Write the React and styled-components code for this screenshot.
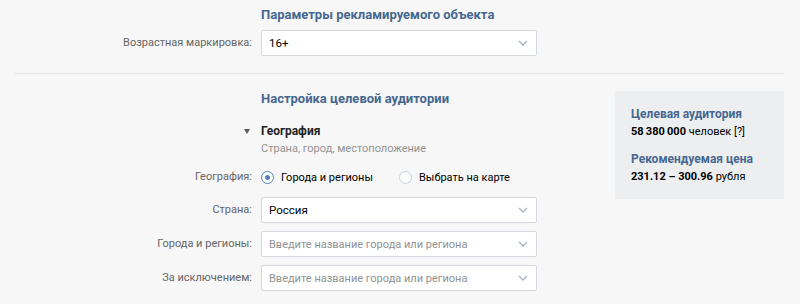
import React from 'react';
import styled, { createGlobalStyle } from 'styled-components';

const GlobalStyle = createGlobalStyle`
  html, body {
    margin: 0;
    background: #f7f7f7;
  }
  body {
    font-family: Roboto, "Open Sans", Arial, sans-serif;
    font-size: 11px;
    color: #000;
  }
`;

const Page = styled.div`
  padding: 6px 16px 0 15px;
  width: 800px;
  height: 304px;
  box-sizing: border-box;
  overflow: hidden;
`;

const Section = styled.div`
  padding-bottom: ${(p) => p.bottom || 0}px;
  border-bottom: ${(p) => (p.divided ? '1px solid #e1e3e6' : 'none')};
`;

const Columns = styled.div`
  display: flex;
  justify-content: space-between;
  align-items: flex-start;
`;

const Main = styled.div`
  padding-top: 16px;
`;

const Row = styled.div`
  display: grid;
  grid-template-columns: 237px 276px;
  column-gap: 9px;
  align-items: center;
  margin-top: ${(p) => p.top || 0}px;
`;

const Label = styled.div`
  text-align: right;
  color: #656565;
  line-height: 16px;
`;

const Title = styled.div`
  grid-column: 2;
  font-size: 13px;
  font-weight: 700;
  color: #45678f;
  line-height: 18px;
  white-space: nowrap;
`;

const Toggle = styled.span`
  justify-self: end;
  margin-right: 2px;
  width: 0;
  height: 0;
  border-left: 3px solid transparent;
  border-right: 3px solid transparent;
  border-top: 5px solid #5c5c5c;
`;

const GroupName = styled.div`
  font-size: 12px;
  font-weight: 700;
  color: #222;
  line-height: 16px;
`;

const Hint = styled.div`
  grid-column: 2;
  color: #939393;
  line-height: 16px;
`;

const Select = styled.div`
  height: 26px;
  box-sizing: border-box;
  background: #fff;
  border: 1px solid #d3d9de;
  border-radius: 2px;
  display: flex;
  align-items: center;
  justify-content: space-between;
  padding: 0 8px 0 7px;
  font-size: ${(p) => (p.placeholder ? '11px' : '11.5px')};
  color: ${(p) => (p.placeholder ? '#929292' : '#000')};
  white-space: nowrap;
`;

const Radios = styled.div`
  display: flex;
  align-items: center;
  gap: 26px;
  height: 20px;
  white-space: nowrap;
`;

const Radio = styled.label`
  display: flex;
  align-items: center;
  gap: 7px;
  color: #000;
`;

const Circle = styled.span`
  width: 13px;
  height: 13px;
  box-sizing: border-box;
  border-radius: 50%;
  background: #fff;
  border: 1px solid ${(p) => (p.checked ? '#5181b8' : '#c5d0db')};
  display: flex;
  align-items: center;
  justify-content: center;
  &::after {
    content: '';
    display: ${(p) => (p.checked ? 'block' : 'none')};
    width: 5px;
    height: 5px;
    border-radius: 50%;
    background: #5181b8;
  }
`;

const Aside = styled.div`
  width: 169px;
  margin-top: 17px;
  background: #edeef0;
  box-sizing: border-box;
  padding: 15px 16px 14px;
`;

const AsideTitle = styled.div`
  font-size: 12px;
  font-weight: 700;
  color: #45678f;
  line-height: 16px;
  margin-top: ${(p) => p.top || 0}px;
`;

const AsideText = styled.div`
  line-height: 16px;
  margin-top: 2px;
  white-space: nowrap;
  b {
    font-weight: 700;
  }
`;

const Chevron = () => (
  <svg width="10" height="6" viewBox="0 0 10 6" fill="none">
    <path d="M1 1l4 4 4-4" stroke="#a8b1bc" strokeWidth="1.3" />
  </svg>
);

const Field = ({ label, value, placeholder, top }) => (
  <Row top={top}>
    <Label>{label}</Label>
    <Select placeholder={placeholder ? 1 : 0}>
      <span>{value || placeholder}</span>
      <Chevron />
    </Select>
  </Row>
);

export default function App() {
  return (
    <>
      <GlobalStyle />
      <Page>
        <Section divided bottom={17}>
          <Row>
            <Title>Параметры рекламируемого объекта</Title>
          </Row>
          <Field label="Возрастная маркировка:" value="16+" top={6} />
        </Section>
        <Columns>
          <Main>
            <Row>
              <Title>Настройка целевой аудитории</Title>
            </Row>
            <Row top={15}>
              <Toggle />
              <GroupName>География</GroupName>
            </Row>
            <Row top={2}>
              <Hint>Страна, город, местоположение</Hint>
            </Row>
            <Row top={10}>
              <Label>География:</Label>
              <Radios>
                <Radio>
                  <Circle checked />
                  Города и регионы
                </Radio>
                <Radio>
                  <Circle />
                  Выбрать на карте
                </Radio>
              </Radios>
            </Row>
            <Field label="Страна:" value="Россия" top={10} />
            <Field label="Города и регионы:" placeholder="Введите название города или региона" top={8} />
            <Field label="За исключением:" placeholder="Введите название города или региона" top={8} />
          </Main>
          <Aside>
            <AsideTitle>Целевая аудитория</AsideTitle>
            <AsideText>
              <b>58&#8201;380&#8201;000</b> человек [?]
            </AsideText>
            <AsideTitle top={11}>Рекомендуемая цена</AsideTitle>
            <AsideText>
              <b>231.12 – 300.96</b> рубля
            </AsideText>
          </Aside>
        </Columns>
      </Page>
    </>
  );
}
